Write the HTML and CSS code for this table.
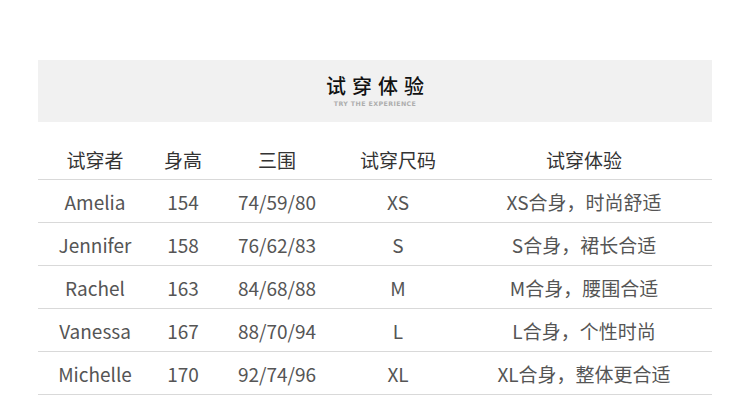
FILE: index.html
```html
<!DOCTYPE html>
<html lang="zh-CN">
<head>
<meta charset="utf-8">
<title>试穿体验</title>
<link rel="stylesheet" href="styles.css">
</head>
<body>
<div class="page">
  <div class="banner">
    <div class="banner-title">试穿体验</div>
    <div class="banner-sub">TRY THE EXPERIENCE</div>
  </div>
  <div class="table">
    <div class="row head">
      <div>试穿者</div><div>身高</div><div>三围</div><div>试穿尺码</div><div>试穿体验</div>
    </div>
    <div class="row">
      <div>Amelia</div><div>154</div><div>74/59/80</div><div>XS</div><div>XS合身，时尚舒适</div>
    </div>
    <div class="row">
      <div>Jennifer</div><div>158</div><div>76/62/83</div><div>S</div><div>S合身，裙长合适</div>
    </div>
    <div class="row">
      <div>Rachel</div><div>163</div><div>84/68/88</div><div>M</div><div>M合身，腰围合适</div>
    </div>
    <div class="row">
      <div>Vanessa</div><div>167</div><div>88/70/94</div><div>L</div><div>L合身，个性时尚</div>
    </div>
    <div class="row">
      <div>Michelle</div><div>170</div><div>92/74/96</div><div>XL</div><div>XL合身，整体更合适</div>
    </div>
  </div>
</div>
</body>
</html>
```

FILE: styles.css
```css
html, body {
  margin: 0;
  padding: 0;
  background: #fff;
}

.page {
  width: 674px;
  margin: 0 auto;
  padding-top: 60px;
  font-family: "Noto Sans CJK SC", "Noto Sans", sans-serif;
}

.banner {
  height: 62px;
  background: #f1f1f1;
  display: flex;
  flex-direction: column;
  align-items: center;
  padding-top: 14px;
  box-sizing: border-box;
}

.banner-title {
  font-size: 20px;
  line-height: 24px;
  font-weight: 500;
  color: #111;
  letter-spacing: 6px;
  padding-left: 6px;
}

.banner-sub {
  font-family: "DejaVu Sans", sans-serif;
  font-size: 6.3px;
  line-height: 10px;
  font-weight: bold;
  color: #adadad;
  letter-spacing: 0.4px;
  margin-top: 1px;
}

.table {
  margin-top: 16px;
}

.row {
  display: grid;
  grid-template-columns: 114px 62px 126px 116px 256px;
  height: 42px;
  align-items: center;
  border-bottom: 1px solid #d9d9d9;
  font-size: 19px;
  color: #555;
  text-align: center;
}

.row.head {
  color: #333;
  padding-top: 2px;
  box-sizing: border-box;
  height: 42px;
}
```
